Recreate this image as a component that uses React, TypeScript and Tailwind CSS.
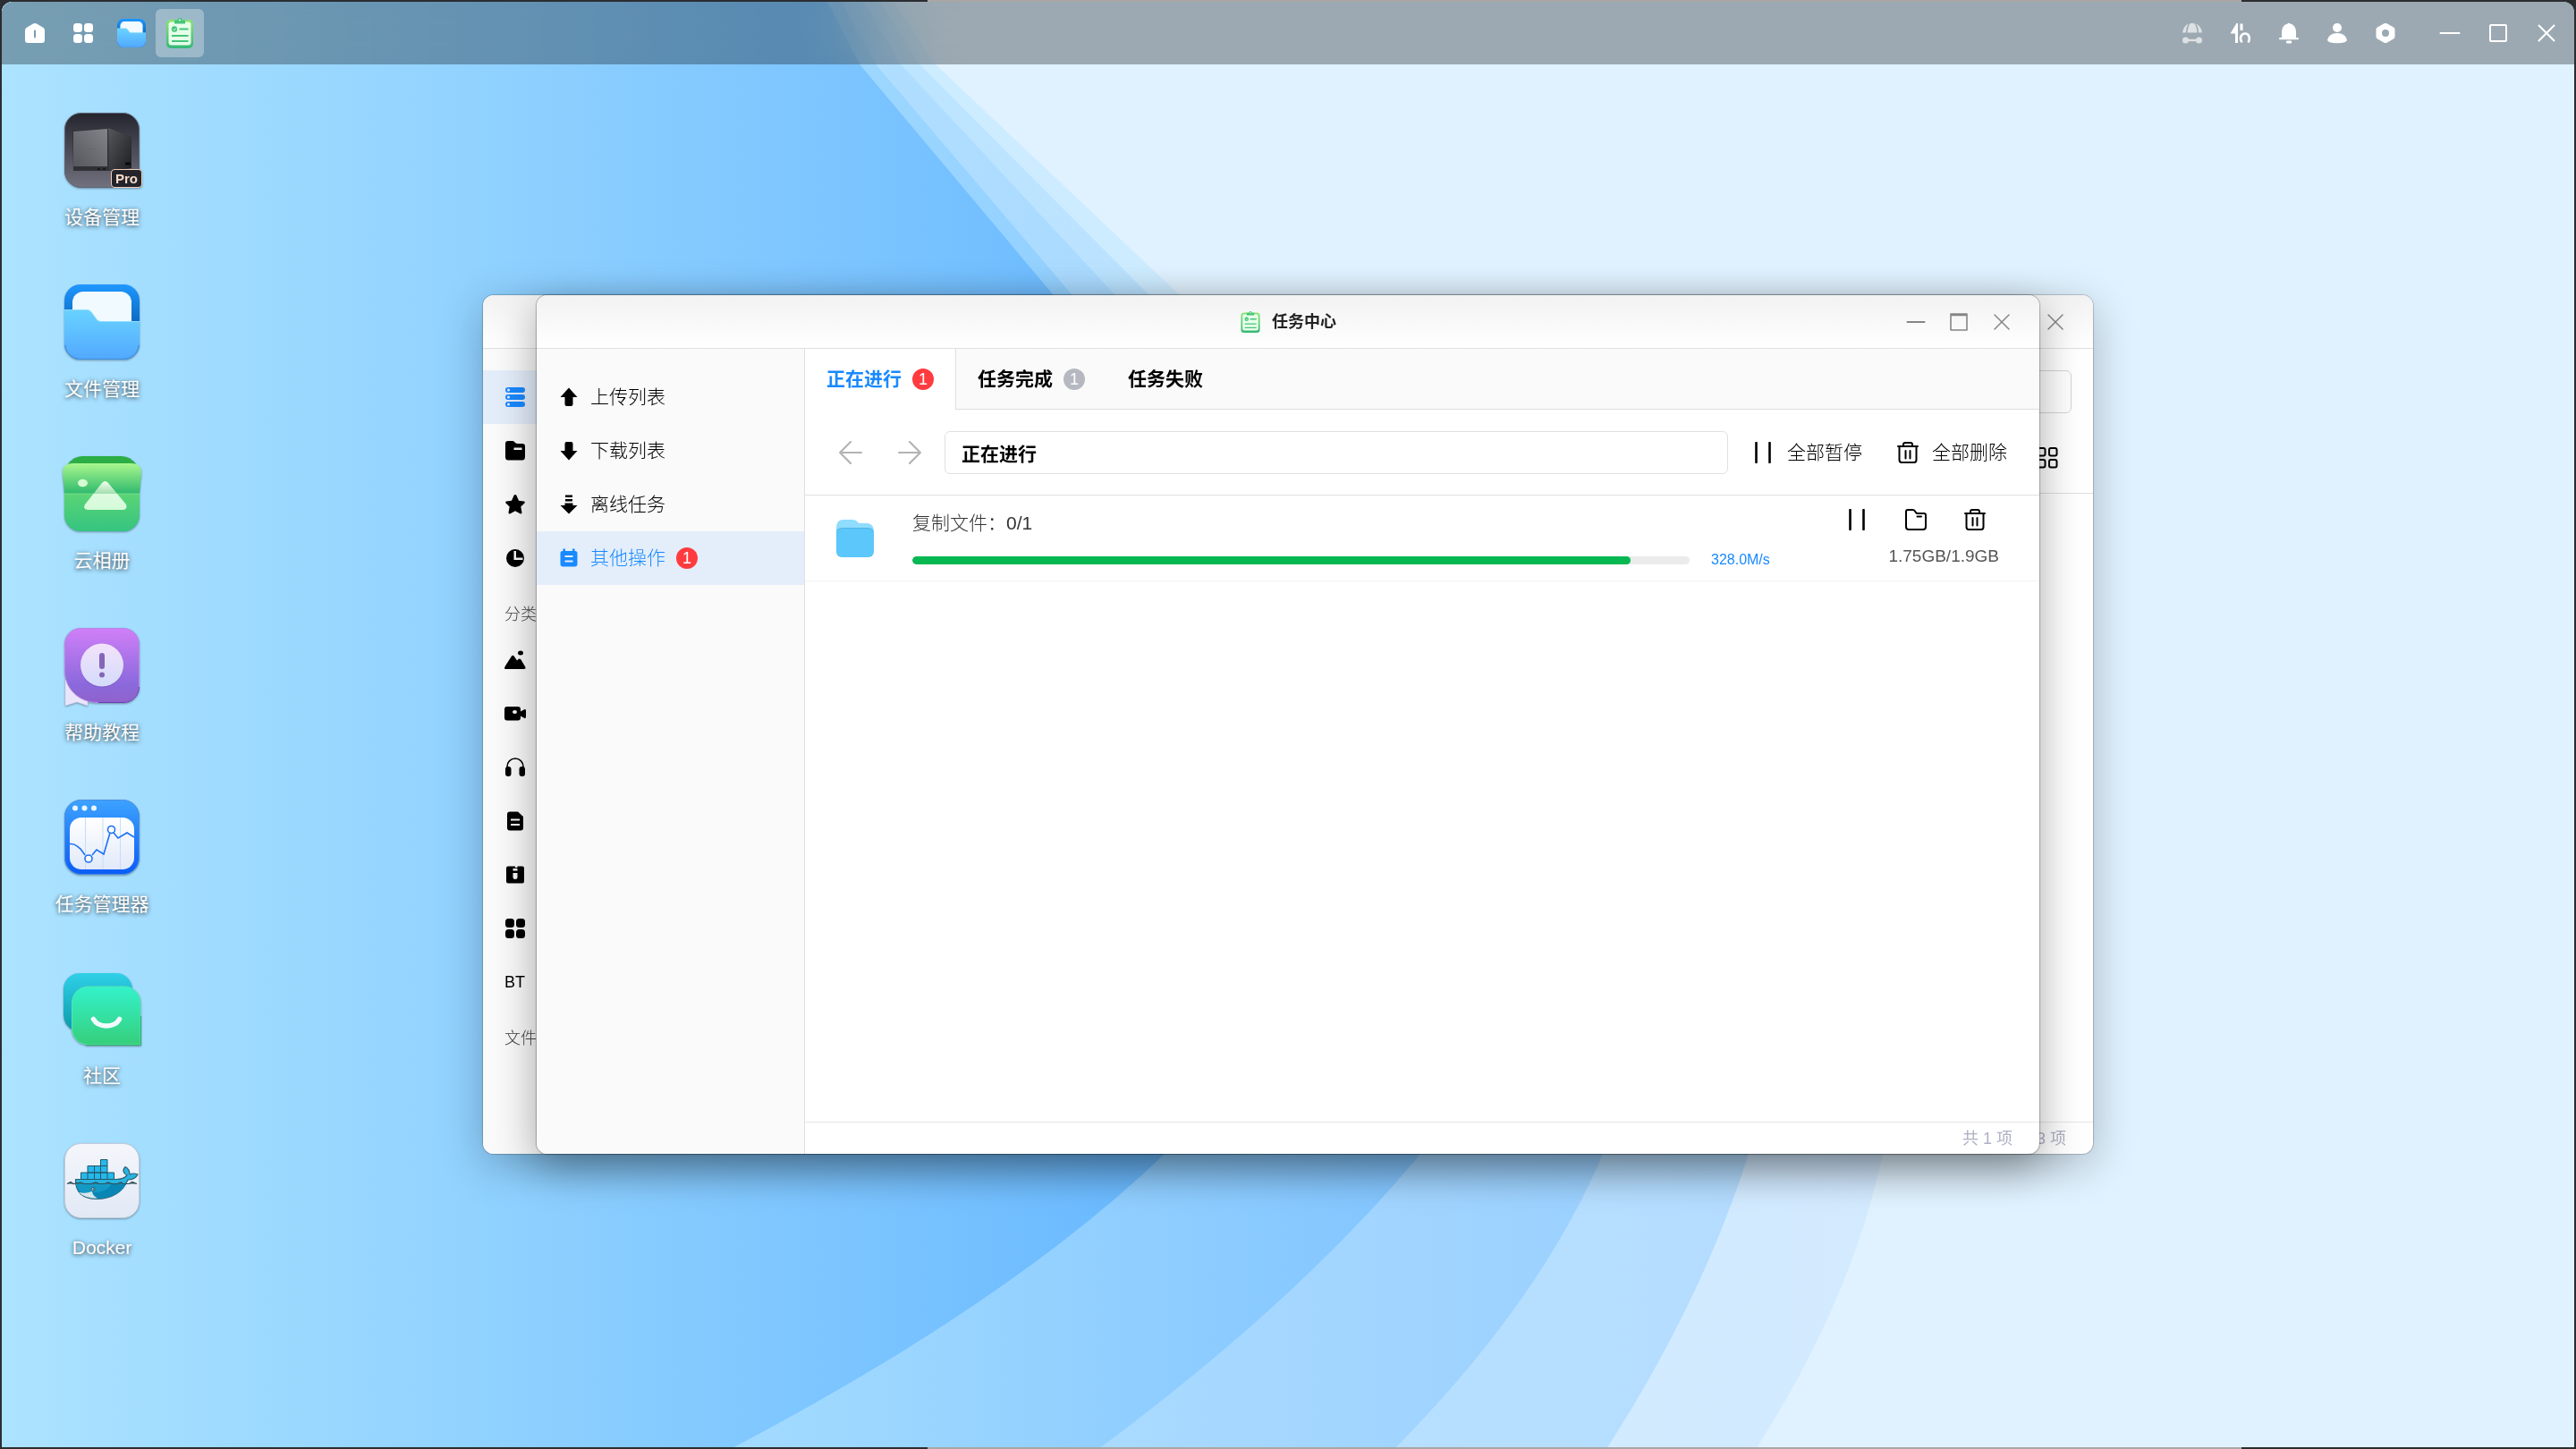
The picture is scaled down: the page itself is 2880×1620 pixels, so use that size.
import type { ReactNode } from "react";

interface IconProps {
  className?: string;
  children: ReactNode;
}

// 24x24 outline icon
function Line({ className = "size-6", children }: IconProps) {
  return (
    <svg
      viewBox="0 0 24 24"
      className={className}
      fill="none"
      stroke="currentColor"
      strokeWidth="2"
      strokeLinecap="round"
      strokeLinejoin="round"
    >
      {children}
    </svg>
  );
}

// 24x24 filled icon
function Solid({ className = "size-6", children }: IconProps) {
  return (
    <svg viewBox="0 0 24 24" className={className} fill="currentColor">
      {children}
    </svg>
  );
}

function Wallpaper() {
  return (
    <svg
      viewBox="2 2 2876 1616"
      preserveAspectRatio="none"
      className="absolute inset-0 h-full w-full"
    >
      <defs>
        <linearGradient id="w1" gradientUnits="userSpaceOnUse" x1="0" y1="0" x2="1300" y2="0">
          <stop offset="0" stopColor="#ace3ff" />
          <stop offset="1" stopColor="#69b9ff" />
        </linearGradient>
        <linearGradient id="w2" gradientUnits="userSpaceOnUse" x1="817" y1="0" x2="1588" y2="0">
          <stop offset="0" stopColor="#a3dbff" />
          <stop offset="1" stopColor="#82c5ff" />
        </linearGradient>
        <linearGradient id="w3" gradientUnits="userSpaceOnUse" x1="980" y1="0" x2="1792" y2="0">
          <stop offset="0" stopColor="#b0deff" />
          <stop offset="1" stopColor="#9bd1ff" />
        </linearGradient>
        <linearGradient id="w4" gradientUnits="userSpaceOnUse" x1="1008" y1="0" x2="1955" y2="0">
          <stop offset="0" stopColor="#bde5ff" />
          <stop offset="1" stopColor="#b3dcff" />
        </linearGradient>
        <linearGradient id="w5" gradientUnits="userSpaceOnUse" x1="1029" y1="0" x2="2105" y2="0">
          <stop offset="0" stopColor="#ccecff" />
          <stop offset="1" stopColor="#d3eaff" />
        </linearGradient>
      </defs>
      <rect width="2880" height="1620" fill="#e0f2ff" />
      <path fill="url(#w5)" d="M0 0H998L1047 73L1318 329C1900 650 2160 850 2105 1290Q2070 1454 1963 1620H0Z" />
      <path fill="url(#w4)" d="M0 0H982L1029 73L1284 329C1800 650 2000 850 1955 1290Q1903 1454 1796 1620H0Z" />
      <path fill="url(#w3)" d="M0 0H964L1008 73L1246 329C1700 650 1860 850 1792 1290Q1723 1454 1559 1620H0Z" />
      <path fill="url(#w2)" d="M0 0H940L980 73L1198 329C1500 650 1700 850 1588 1290Q1452 1454 1228 1620H0Z" />
      <path fill="url(#w1)" d="M0 0H924L962 73L1177 329C1350 650 1450 950 1302 1290Q1132 1454 817 1620H0Z" />
    </svg>
  );
}

function FolderLogo({ className = "size-[84px]" }: { className?: string }) {
  return (
    <svg viewBox="0 0 84 84" className={className}>
      <defs>
        <linearGradient id="fb" x1="0" y1="0" x2="0" y2="1">
          <stop offset="0" stopColor="#1f97ff" />
          <stop offset=".5" stopColor="#0b6bc4" />
        </linearGradient>
        <linearGradient id="ff" x1="0" y1="0" x2="0" y2="1">
          <stop offset="0" stopColor="#69d3ff" />
          <stop offset="1" stopColor="#52a8ff" />
        </linearGradient>
      </defs>
      <rect width="84" height="84" rx="18" fill="url(#fb)" />
      <path d="M9 60V20A12 12 0 0 1 21 8H63A12 12 0 0 1 75 20V60Z" fill="#f0faff" />
      <path
        d="M0 28H25Q28 28 30 31L36 39Q37 41 40 41H84V66A18 18 0 0 1 66 84H18A18 18 0 0 1 0 66Z"
        fill="url(#ff)"
      />
      <path d="M0 28.500H25Q28 28.500 30 31L36 39Q37 41.500 40 41.500H84" fill="none" stroke="#90dcff" />
      <path d="M1 68A17 17 0 0 0 18 83.400H66A17 17 0 0 0 83 68" fill="none" stroke="#3f8fdc" />
    </svg>
  );
}

function ClipboardLogo({ className }: { className: string }) {
  return (
    <svg viewBox="0 0 32 34" className={className}>
      <defs>
        <linearGradient id="cb" x1="0" y1="0" x2="0" y2="1">
          <stop offset="0" stopColor="#8be56f" />
          <stop offset="1" stopColor="#35b877" />
        </linearGradient>
      </defs>
      <rect x="1" y="2" width="30" height="32" rx="5" fill="url(#cb)" />
      <rect x="3.500" y="4.500" width="25" height="26" rx="3" fill="#e6ffe9" />
      <path d="M10 2.500H13.500A2.500 2.500 0 0 1 18.500 2.500H22V6.500H10Z" fill="#46c47a" />
      <circle cx="16" cy="2.500" r="1" fill="#e6ffe9" />
      <circle cx="10" cy="12.500" r="3.200" fill="#46c47a" />
      <path d="M8.500 12.500L9.800 13.800L12 11.500" stroke="#e6ffe9" fill="none" />
      <path d="M15.500 12.500H25.500M7 20H25.500M7 26H25.500" stroke="#46c47a" strokeWidth="2" />
    </svg>
  );
}

function DeviceLogo() {
  return (
    <div className="relative size-[84px]">
      <svg viewBox="0 0 84 84" className="size-full">
        <defs>
          <linearGradient id="dv" x1="0" y1="0" x2="0" y2="1">
            <stop offset="0" stopColor="#24252e" />
            <stop offset="1" stopColor="#72717f" />
          </linearGradient>
          <linearGradient id="df" x1="0" y1="1" x2="1" y2="0">
            <stop offset="0" stopColor="#56575c" />
            <stop offset="1" stopColor="#83848b" />
          </linearGradient>
          <linearGradient id="ds" x1="0" y1="0" x2="1" y2="1">
            <stop offset="0" stopColor="#55575b" />
            <stop offset="1" stopColor="#1d1f23" />
          </linearGradient>
        </defs>
        <rect x=".5" y=".5" width="83" height="83" rx="18" fill="url(#dv)" stroke="#5d6475" />
        <path d="M9 20L48 17L75 27V62L50 65H10Z" fill="#303135" />
        <path d="M10 21L48 18V60H10Z" fill="url(#df)" />
        <path d="M49 17L75 27V62L50 65Z" fill="url(#ds)" />
        <path d="M22 40.500H36" stroke="#66676c" />
        <path d="M68 57H74" stroke="#08090a" strokeWidth="3" />
        <path d="M37 63H40M43 63H46" stroke="#17181a" strokeWidth="2" />
      </svg>
      <span className="absolute -right-[3px] bottom-0 rounded-[4px] border border-[#f3cdb8] bg-[#23252a] px-1 text-[15px] leading-[19px] font-bold text-[#f5d9ca]">
        Pro
      </span>
    </div>
  );
}

function PhotoLogo() {
  return (
    <svg viewBox="0 0 84 84" className="size-[84px] overflow-visible">
      <defs>
        <linearGradient id="pt" x1="0" y1="0" x2="0" y2="1">
          <stop offset="0" stopColor="#a9f78e" />
          <stop offset="1" stopColor="#2fb96d" />
        </linearGradient>
        <linearGradient id="pb" x1="0" y1="0" x2="0" y2="1">
          <stop offset="0" stopColor="#5cd575" />
          <stop offset="1" stopColor="#35c481" />
        </linearGradient>
        <linearGradient id="pm" x1="0" y1="0" x2="0" y2="1">
          <stop offset="0" stopColor="#f1fff0" />
          <stop offset=".43" stopColor="#a3dfae" />
          <stop offset=".44" stopColor="#e0fbe2" />
          <stop offset="1" stopColor="#d3fad8" />
        </linearGradient>
      </defs>
      <path d="M3 10Q10 0 20 0H64Q74 0 81 10V20H3Z" fill="#2cae46" />
      <path d="M0 41H84V66A18 18 0 0 1 66 84H18A18 18 0 0 1 0 66Z" fill="url(#pb)" />
      <path d="M0 42L-2 20Q-3 8 10 8H74Q87 8 86 20L84 42Z" fill="url(#pt)" />
      <path d="M0 42H84" stroke="#79dd8f" />
      <ellipse cx="20.500" cy="30" rx="5.500" ry="4.300" fill="#d5fbd2" />
      <path
        d="M42 30Q45.500 26 49 30L69 54Q71 59 66 60H26Q20 59 23 54Z"
        fill="url(#pm)"
      />
    </svg>
  );
}

function HelpLogo() {
  return (
    <svg viewBox="0 0 84 84" className="size-[84px] overflow-visible">
      <defs>
        <linearGradient id="hp" x1="0" y1="0" x2="0" y2="1">
          <stop offset="0" stopColor="#d07ff8" />
          <stop offset=".75" stopColor="#8b69dc" />
          <stop offset="1" stopColor="#8f62cb" />
        </linearGradient>
        <linearGradient id="hc" x1="0" y1="0" x2="0" y2="1">
          <stop offset="0" stopColor="#f3e2fb" />
          <stop offset="1" stopColor="#d3dcfb" />
        </linearGradient>
      </defs>
      <path d="M1 58V87L14 83L26 87V70Z" fill="#ebe5fc" stroke="#c9c4ea" strokeWidth=".5" />
      <path
        d="M18 .5H66A17.500 17.500 0 0 1 83.500 18V66A17.500 17.500 0 0 1 66 83.500H38C16 83.500 .5 68 .5 48V18A17.500 17.500 0 0 1 18 .5Z"
        fill="url(#hp)"
        stroke="#b08be6"
      />
      <path d="M38 83.500H66A17.500 17.500 0 0 0 83.500 66" fill="none" stroke="#6a3fae" />
      <circle cx="42" cy="43" r="24" fill="#7a55c4" opacity=".4" />
      <circle cx="42" cy="41.500" r="24" fill="url(#hc)" />
      <path d="M42 31V43" stroke="#8465b6" strokeWidth="6" strokeLinecap="round" />
      <circle cx="42" cy="52.500" r="3" fill="#8465b6" />
    </svg>
  );
}

function MonitorLogo() {
  return (
    <svg viewBox="0 0 84 84" className="size-[84px]">
      <defs>
        <linearGradient id="mb" x1="0" y1="0" x2="0" y2="1">
          <stop offset="0" stopColor="#3ca2ff" />
          <stop offset="1" stopColor="#0b5cf7" />
        </linearGradient>
        <linearGradient id="mp" x1="0" y1="0" x2="0" y2="1">
          <stop offset="0" stopColor="#fff" />
          <stop offset="1" stopColor="#e1e9f9" />
        </linearGradient>
      </defs>
      <rect x=".5" y=".5" width="83" height="83" rx="18" fill="url(#mb)" stroke="#4a8fe0" />
      <g fill="#e9f6ff">
        <circle cx="12" cy="9.500" r="3" />
        <circle cx="22.500" cy="9.500" r="3" />
        <circle cx="33" cy="9.500" r="3" />
      </g>
      <rect x="6" y="20" width="72" height="58" rx="13" fill="url(#mp)" />
      <path d="M23.500 20V78M43 20V78M62.500 20V78" stroke="#c8dcf6" />
      <path
        d="M6 49.500Q11 49 14 52L18 55L23 62M31 62L36 56L44 61L51 37M55 37L60 43L70 37L78 42"
        fill="none"
        stroke="#1b71f5"
        strokeWidth="1.600"
      />
      <circle cx="27" cy="66" r="4" fill="#fff" stroke="#1b71f5" strokeWidth="1.600" />
      <circle cx="52.500" cy="33.500" r="4" fill="#fff" stroke="#1b71f5" strokeWidth="1.600" />
    </svg>
  );
}

function CommunityLogo() {
  return (
    <svg viewBox="0 0 84 84" className="size-[84px] overflow-visible">
      <defs>
        <linearGradient id="k1" x1="0" y1="0" x2="0" y2="1">
          <stop offset="0" stopColor="#2fd0e8" />
          <stop offset="1" stopColor="#0c9bab" />
        </linearGradient>
        <linearGradient id="k2" x1="0" y1="0" x2="0" y2="1">
          <stop offset="0" stopColor="#33f2cb" />
          <stop offset="1" stopColor="#36cf7b" />
        </linearGradient>
      </defs>
      <path d="M17 2H58A18 18 0 0 1 76 20V66H10Q-1 60 -1 48V20A18 18 0 0 1 17 2Z" fill="url(#k1)" />
      <path
        d="M27 17H67A18 18 0 0 1 85 35V82H27A18 18 0 0 1 8.500 64V35A18 18 0 0 1 27 17Z"
        fill="url(#k2)"
        stroke="#58e3b4"
      />
      <path d="M24 82.500H85.500V50" fill="none" stroke="#2fae6b" />
      <path
        d="M32.500 53.500C38 63.500 56 63.500 61.500 53.500"
        fill="none"
        stroke="#f2fbff"
        strokeWidth="5.500"
        strokeLinecap="round"
      />
    </svg>
  );
}

function DockerLogo() {
  return (
    <svg viewBox="0 0 84 84" className="size-[84px]">
      <defs>
        <linearGradient id="dk" x1="0" y1="0" x2="0" y2="1">
          <stop offset="0" stopColor="#f4f6fb" />
          <stop offset="1" stopColor="#e2e9f5" />
        </linearGradient>
      </defs>
      <rect x=".5" y=".5" width="83" height="83" rx="18" fill="url(#dk)" stroke="#c3cbd8" />
      <path
        d="M12.500 40.500H58Q66 40.500 70 36Q63 32 68 26.500Q73 29 73 35Q77 33 82 35Q79 41 71 41Q62 62 36 62.500Q12 62 12.500 40.500Z"
        fill="#27b4e0"
        stroke="#2f6072"
        strokeWidth="1.200"
        strokeLinejoin="round"
      />
      <path d="M13 46H69Q60 61.500 37 62Q15 61.500 13 46Z" fill="#0a86b5" />
      <path d="M13 46H52Q48 55 32 55Q22 56 17 54Z" fill="#1499c6" />
      <path d="M16 55Q24 57 31 54Q31 58 37 62Q23 62 16 55Z" fill="#d6e6ea" />
      <g fill="#24b9ea" stroke="#24566b">
        <path d="M18.500 33H55.500V40.500H18.500ZM26 25.500H48V33H26ZM40.500 18.500H48V25.500H40.500Z" />
        <path d="M26 33V40.500M33.500 25.500V40.500M40.500 25.500V40.500M48 33V40.500" />
      </g>
      <path
        d="M3 45.500L7 43.500L10 45.500L18 44L22 45.500L30 45.500L35 44L39 45.500H45L49 44L53 45.500H59L63 44L66 45.500H72L76 43.500L81 45.500"
        fill="#2f4f5c"
        stroke="#2f4f5c"
        strokeWidth="1.200"
      />
      <circle cx="32" cy="51.500" r="2" fill="#d6e6ea" stroke="#24566b" />
      <circle cx="32.300" cy="51.500" r=".9" fill="#24566b" />
    </svg>
  );
}

function SmallFolder() {
  return (
    <svg viewBox="0 0 44 44" className="size-11 shrink-0">
      <path d="M1 10Q1 1 9 1H19Q23 1 25 4Q26 5 29 5H36Q43 6 43 14V24H1Z" fill="#8fdcfd" />
      <path d="M1 16Q1 10 8 10H36Q43 10 43 16V18H1Z" fill="#4fb3e6" />
      <rect x="1" y="11" width="42" height="32" rx="6" fill="#5bc7fa" />
    </svg>
  );
}

const pauseIcon = (
  <Line className="size-6">
    <path d="M4.500 1V23M19.500 1V23" strokeWidth="2.600" />
  </Line>
);

const trashIcon = (
  <Line className="size-6">
    <path d="M1 5H23M7 4.500V3Q7 1 9 1H15Q17 1 17 3V4.500M2.500 5.500V20Q2.500 23 5 23H19Q21.500 23 21.500 20V5.500M9.500 10V18.500M14.500 10V18.500" />
  </Line>
);

const folderOutline = (
  <Line className="size-6">
    <path d="M1 3Q1 1 3 1H8.500Q10 1 11 2.500L12 4Q12.500 5 14 5H21Q23 5 23 7V20Q23 23 20 23H4Q1 23 1 20ZM13.500 8.500H18" />
  </Line>
);

const gridSolid = (
  <Solid className="size-6">
    <rect x="1" y="1" width="10" height="10" rx="3.500" />
    <rect x="13" y="1" width="10" height="10" rx="3.500" />
    <rect x="1" y="13" width="10" height="10" rx="3.500" />
    <rect x="13" y="13" width="10" height="10" rx="3.500" />
  </Solid>
);

const desktopApps = [
  { name: "设备管理", logo: <DeviceLogo /> },
  { name: "文件管理", logo: <FolderLogo /> },
  { name: "云相册", logo: <PhotoLogo /> },
  { name: "帮助教程", logo: <HelpLogo /> },
  { name: "任务管理器", logo: <MonitorLogo /> },
  { name: "社区", logo: <CommunityLogo /> },
  { name: "Docker", logo: <DockerLogo /> },
];

const dockItems = [
  {
    name: "主页",
    icon: (
      <Solid>
        <path
          fillRule="evenodd"
          d="M12 1Q13 1 14 1.500L21.500 6Q23 7 23 9V20Q23 23 20 23H4Q1 23 1 20V9Q1 7 2.500 6L10 1.500Q11 1 12 1ZM12 8.500Q11 8.500 11 9.500V16.500Q11 17.500 12 17.500Q13 17.500 13 16.500V9.500Q13 8.500 12 8.500Z"
        />
      </Solid>
    ),
  },
  { name: "应用", icon: gridSolid },
  { name: "文件管理", icon: <FolderLogo className="size-8" /> },
  { name: "任务中心", icon: <ClipboardLogo className="h-[34px] w-8" />, active: true },
];

const trayItems = [
  {
    name: "加速",
    icon: (
      <Solid className="size-6 opacity-65">
        <path d="M1 11.500Q2 4 8 1.500Q5 5 5 11.500ZM6.500 11.500Q7 4 10 1H14Q17 4 17.500 11.500ZM23 11.500Q22 4 16 1.500Q19 5 19 11.500Z" />
        <circle cx="4.500" cy="20" r="3.500" />
        <circle cx="19.500" cy="20" r="3.500" />
        <path d="M5 18.800H19V21.200H5Z" />
      </Solid>
    ),
  },
  {
    name: "传输",
    icon: (
      <Solid>
        <path d="M9 1V23H6V12.500H.5L7.500 1Z" />
        <path d="M11.500 1.500H14.500V9H11.500Z" />
        <path
          d="M13 21.500Q10.500 16.500 14 13.500Q17 11.500 20 13.500Q23 16.500 21 21.500"
          fill="none"
          stroke="currentColor"
          strokeWidth="2.600"
          strokeLinecap="round"
        />
      </Solid>
    ),
  },
  {
    name: "通知",
    icon: (
      <Solid>
        <path d="M10.500 1.500Q12 0 13.500 1.500Q19.500 3 20 10V17H22Q23 17 23 18.300Q23 19.300 22 19.300H2Q1 19.300 1 18.300Q1 17 2 17H4V10Q4.500 3 10.500 1.500Z" />
        <rect x="8.800" y="20.500" width="6.500" height="3" rx="1.500" />
      </Solid>
    ),
  },
  {
    name: "用户",
    icon: (
      <Solid>
        <circle cx="12" cy="6" r="5" />
        <path d="M1 19.500Q3 12 12 12Q21 12 23 19.500Q23 23.200 12 23.200Q1 23.200 1 19.500Z" />
      </Solid>
    ),
  },
  {
    name: "设置",
    icon: (
      <Solid>
        <path
          fillRule="evenodd"
          d="M10.500 1.300Q12 .6 13.500 1.300L21 5.600Q22.500 6.500 22.500 8V16Q22.500 17.500 21 18.400L13.500 22.700Q12 23.400 10.500 22.700L3 18.400Q1.500 17.500 1.500 16V8Q1.500 6.500 3 5.600ZM12 8A4 4 0 1 0 12 16A4 4 0 1 0 12 8Z"
        />
      </Solid>
    ),
  },
];

const screenControls = [
  { name: "最小化", icon: <path d="M1.500 12H22.500" /> },
  { name: "最大化", icon: <rect x="3" y="3" width="18" height="18" rx="1" /> },
  { name: "关闭", icon: <path d="M3.500 3.500L20.500 20.500M20.500 3.500L3.500 20.500" /> },
];

const windowControls = [
  { name: "最小化", icon: <path d="M2.500 12H21.500" /> },
  { name: "最大化", icon: <path d="M3 4.500H21M3 3V21H21V3Z" strokeWidth="1.600" /> },
  { name: "关闭", icon: <path d="M4 4L20 20M20 4L4 20" strokeWidth="1.500" /> },
];

const taskMenu = [
  { name: "上传列表", icon: <path d="M12 1.500L21.500 12H16.500V20Q16.500 22 14.500 22H9.500Q7.500 22 7.500 20V12H2.500Z" /> },
  { name: "下载列表", icon: <path d="M12 22.500L2.500 12H7.500V4Q7.500 2 9.500 2H14.500Q16.500 2 16.500 4V12H21.500Z" /> },
  {
    name: "离线任务",
    icon: <path d="M12 22.500L2.500 13H7.500V10.500H16.500V13H21.500ZM8 1.500H16V4H8ZM8 6H16V8.500H8Z" />,
  },
  {
    name: "其他操作",
    count: 1,
    icon: (
      <path
        fillRule="evenodd"
        d="M5.500 1.500H8V4H16V1.500H18.500V4H19Q21.500 4 21.500 6.500V18.500Q21.500 21.500 18.500 21.500H5.500Q2.500 21.500 2.500 18.500V6.500Q2.500 4 5 4H5.500ZM7.500 9V11H16.500V9ZM7.500 14.500V16.500H16.500V14.500Z"
      />
    ),
  },
];

const placeIcons = [
  {
    name: "存储",
    icon: (
      <path
        fillRule="evenodd"
        d="M4 1H20Q23 1 23 4Q23 7 20 7H4Q1 7 1 4Q1 1 4 1ZM4.500 2.500A1.500 1.500 0 1 0 4.500 5.500A1.500 1.500 0 1 0 4.500 2.500ZM4 9H20Q23 9 23 12Q23 15 20 15H4Q1 15 1 12Q1 9 4 9ZM4.500 10.500A1.500 1.500 0 1 0 4.500 13.500A1.500 1.500 0 1 0 4.500 10.500ZM4 17H20Q23 17 23 20Q23 23 20 23H4Q1 23 1 20Q1 17 4 17ZM4.500 18.500A1.500 1.500 0 1 0 4.500 21.500A1.500 1.500 0 1 0 4.500 18.500Z"
      />
    ),
  },
  {
    name: "文件夹",
    icon: (
      <path
        fillRule="evenodd"
        d="M1 4Q1 1 4 1H9Q11 1 12 3Q13 4 15 4H20Q23 4 23 7V19Q23 22.500 20 22.500H4Q1 22.500 1 19ZM10.500 8.500V11H19.500V8.500Z"
      />
    ),
  },
  {
    name: "收藏",
    icon: <path d="M12 1Q13 1 13.500 2L16 7.800L22 8.500Q23.500 9 22.500 10.500L18.300 14.500L19.500 21Q19.500 23 17.500 22.300L12 19.200L6.500 22.300Q4.500 23 4.500 21L5.700 14.500L1.500 10.500Q.5 9 2 8.500L8 7.800L10.500 2Q11 1 12 1Z" />,
  },
  {
    name: "最近",
    icon: <path fillRule="evenodd" d="M12 2A10 10 0 1 0 12 22A10 10 0 1 0 12 2ZM10.500 4H13V11.500H20.500V14H10.500Z" />,
  },
];

const categoryIcons = [
  {
    name: "图片",
    icon: <path d="M0 21Q0 20 1 18.500L8 7.500Q9.500 6 11 8L14 12.500L15.500 11Q17 10 18.500 11.500L23.500 20Q24 22 22 22H1Q0 22 0 21ZM18 1.500A3 2.500 0 1 0 18 6.500A3 2.500 0 1 0 18 1.500Z" />,
  },
  {
    name: "视频",
    icon: (
      <path
        fillRule="evenodd"
        d="M3 4H15Q18 4 18 7V9.500L22.500 7Q24 7 24 8V15.500Q24 17 22.500 17L18 14.500V16.500Q18 19.500 15 19.500H3Q0 19.500 0 16.500V7Q0 4 3 4ZM11.500 8A2.500 2 0 1 0 11.500 12A2.500 2 0 1 0 11.500 8Z"
      />
    ),
  },
  {
    name: "音乐",
    icon: (
      <>
        <path d="M3 13V11A9 9 0 0 1 21 11V13" fill="none" stroke="currentColor" strokeWidth="1.500" />
        <rect x="1" y="11" width="6.500" height="11" rx="3" />
        <rect x="16.500" y="11" width="6.500" height="11" rx="3" />
      </>
    ),
  },
  {
    name: "文档",
    icon: (
      <path
        fillRule="evenodd"
        d="M6 1.500H15L21 7V19.500Q21 22.500 18 22.500H6Q3 22.500 3 19.500V4.500Q3 1.500 6 1.500ZM7 9.500V11.500H17V9.500ZM7 15V17H17V15Z"
      />
    ),
  },
  {
    name: "压缩包",
    icon: (
      <path
        fillRule="evenodd"
        d="M4 2.500H20Q22 2.500 22 4.500V19.500Q22 21.500 20 21.500H4Q2 21.500 2 19.500V4.500Q2 2.500 4 2.500ZM12 2.500V5H9.500V7.500H12V10H9.500V15Q9.500 17 12 17Q14.500 17 14.500 15V10H12V7.500H14.500V5H12V4H14.500V2.500Z"
      />
    ),
  },
];

interface DesktopWindowProps {
  className: string;
  title?: ReactNode;
  footer: string;
  sidebar: ReactNode;
  children: ReactNode;
}

function DesktopWindow({ className, title, footer, sidebar, children }: DesktopWindowProps) {
  return (
    <section
      className={`col-start-1 row-start-1 flex h-[960px] max-h-full max-w-full flex-col overflow-hidden rounded-xl bg-white ${className}`}
    >
      <header className="grid h-[60px] shrink-0 grid-cols-[1fr_auto_1fr] items-center border-b border-[#dfdfdf] bg-linear-to-b from-[#f2f2f2] to-white">
        <h1 className="col-start-2 flex items-center gap-3 text-lg font-bold text-[#222]">{title}</h1>
        <div className="col-start-3 flex justify-end pr-[18px] text-[#858585]">
          {windowControls.map(({ name, icon }) => (
            <button key={name} aria-label={name} className="grid h-12 w-12 place-items-center">
              <Line>{icon}</Line>
            </button>
          ))}
        </div>
      </header>
      <div className="flex min-h-0 flex-1">
        <nav className="w-[300px] shrink-0 border-r border-[#dfdfdf] bg-[#fafafa] pt-6">{sidebar}</nav>
        <div className="flex min-w-0 flex-1 flex-col">
          {children}
          <footer className="flex h-9 shrink-0 items-center justify-end border-t border-[#e6e6e6] pr-[30px] text-lg text-[#aeb0c4]">
            {footer}
          </footer>
        </div>
      </div>
    </section>
  );
}

function Badge({ color, children }: { color: string; children: ReactNode }) {
  return (
    <span className={`grid size-6 place-items-center rounded-full text-lg leading-6 font-normal text-white ${color}`}>
      {children}
    </span>
  );
}

function FileWindow() {
  return (
    <DesktopWindow
      className="w-[1800px] shadow-[0_0_1px_1px_rgba(0,0,0,0.2),0_12px_48px_rgba(0,0,0,0.25)]"
      footer="共 3 项"
      sidebar={
        <>
          {placeIcons.map(({ name, icon }, i) => (
            <button
              key={name}
              aria-label={name}
              className={`flex h-[60px] w-full items-center pl-6 ${i === 0 ? "bg-[#e4eefb] text-[#1989ff]" : "text-black"}`}
            >
              <Solid>{icon}</Solid>
            </button>
          ))}
          <h2 className="mt-3 pl-6 text-lg leading-[42px] font-light text-[#444]">分类</h2>
          {categoryIcons.map(({ name, icon }) => (
            <button key={name} aria-label={name} className="flex h-[60px] w-full items-center pl-6">
              <Solid>{icon}</Solid>
            </button>
          ))}
          <button aria-label="其他" className="flex h-[60px] w-full items-center pl-6">
            {gridSolid}
          </button>
          <button className="flex h-[60px] w-full items-center pl-6 text-lg">BT</button>
          <h2 className="mt-3 pl-6 text-lg leading-[42px] font-light text-[#444]">文件</h2>
        </>
      }
    >
      <div className="flex h-[162px] flex-col gap-[38px] border-b border-[#dfdfdf] px-6 pt-6">
        <input aria-label="路径" className="h-12 shrink-0 rounded-md border border-[#d5d5d5] bg-white px-[18px]" />
        <button aria-label="视图" className="self-end pr-[15px]">
          <Line>
            <rect x="1" y="1" width="8.500" height="8.500" rx="2" />
            <rect x="14" y="1" width="8.500" height="8.500" rx="2" />
            <rect x="1" y="14" width="8.500" height="8.500" rx="2" />
            <rect x="14" y="14" width="8.500" height="8.500" rx="2" />
          </Line>
        </button>
      </div>
      <div className="flex-1" />
    </DesktopWindow>
  );
}

function TaskRow() {
  const progress = 92.4;

  return (
    <li className="flex h-24 border-b border-[#f2f2f2] pr-[45px] pl-[34px]">
      <div className="flex w-[86px] shrink-0 items-center">
        <SmallFolder />
      </div>
      <div className="flex min-w-0 flex-1 flex-col gap-[11px] pt-4">
        <p className="leading-[30px] font-light text-[#333]">复制文件：0/1</p>
        <div className="flex h-[30px] items-center gap-6">
          <div
            role="progressbar"
            aria-label="复制文件"
            aria-valuenow={progress}
            className="h-[9px] flex-1 overflow-hidden rounded-full bg-[#ebebeb]"
          >
            <div className="h-full rounded-full bg-[#05b852]" style={{ width: `${progress}%` }} />
          </div>
          <span className="w-[148px] text-base text-[#1989ff]">328.0M/s</span>
        </div>
      </div>
      <div className="flex shrink-0 flex-col items-end gap-[11px] pt-3">
        <div className="flex h-[30px] items-center gap-[42px] pr-[15px]">
          <button aria-label="暂停">{pauseIcon}</button>
          <button aria-label="打开文件夹">{folderOutline}</button>
          <button aria-label="删除">{trashIcon}</button>
        </div>
        <span className="w-[174px] text-right text-[19px] leading-[30px] text-[#555]">1.75GB/1.9GB</span>
      </div>
    </li>
  );
}

function TaskWindow() {
  return (
    <DesktopWindow
      className="z-10 w-[1680px] shadow-[0_0_1px_1px_rgba(0,0,0,0.25),0_15px_48px_rgba(0,0,0,0.35)]"
      title={
        <>
          <ClipboardLogo className="size-6" />
          任务中心
        </>
      }
      footer="共 1 项"
      sidebar={taskMenu.map(({ name, icon, count }) => (
        <button
          key={name}
          className={`flex h-[60px] w-full items-center gap-3 pl-6 font-light ${count ? "bg-[#e4eefb] text-[#1989ff]" : "text-black"}`}
        >
          <Solid>{icon}</Solid>
          {name}
          {count && <Badge color="bg-[#ff3b3f]">{count}</Badge>}
        </button>
      ))}
    >
      <div className="flex h-[68px] shrink-0 bg-[#fafafa] font-bold">
        <button className="flex items-center gap-3 border-r border-[#dfdfdf] bg-white px-6 pb-px text-[#1989ff]">
          正在进行 <Badge color="bg-[#ff3b3f]">1</Badge>
        </button>
        <div className="flex flex-1 border-b border-[#dfdfdf]">
          <button className="flex items-center gap-3 px-6">
            任务完成 <Badge color="bg-[#b5b8c1]">1</Badge>
          </button>
          <button className="px-6">任务失败</button>
        </div>
      </div>
      <div className="flex h-24 shrink-0 items-center gap-6 border-b border-[#dfdfdf] px-9">
        <div className="flex gap-9 text-[#b3b3b3]">
          <button aria-label="后退" className="grid size-[30px] place-items-center">
            <Line className="size-[26px]">
              <path d="M23 12H1M12 1L1 12L12 23" />
            </Line>
          </button>
          <button aria-label="前进" className="grid size-[30px] place-items-center">
            <Line className="size-[26px]">
              <path d="M1 12H23M12 1L23 12L12 23" />
            </Line>
          </button>
        </div>
        <input
          aria-label="当前位置"
          defaultValue="正在进行"
          className="h-12 min-w-0 flex-1 rounded-md border border-[#e0e0e0] px-[18px] font-bold"
        />
        <div className="flex gap-9 font-light">
          <button className="flex items-center gap-3">
            <span className="grid size-[30px] place-items-center">{pauseIcon}</span>
            全部暂停
          </button>
          <button className="flex items-center gap-3">
            <span className="grid size-[30px] place-items-center">{trashIcon}</span>
            全部删除
          </button>
        </div>
      </div>
      <ul className="min-h-0 flex-1">
        <TaskRow />
      </ul>
    </DesktopWindow>
  );
}

export default function App() {
  return (
    <div className="h-screen w-full bg-[linear-gradient(90deg,#2b2d31_36%,#a9a6a5_36%,#a9a6a5_87%,#2b2d31_87%)] p-[2px] font-['Liberation_Sans','Noto_Sans_CJK_SC',sans-serif] text-[21px] text-black">
      <div className="relative isolate flex h-full flex-col overflow-hidden rounded-t-xl">
        <Wallpaper />
        <header className="relative flex h-[70px] shrink-0 items-center justify-between bg-black/30 pr-1 pl-[10px] text-white backdrop-blur-[36px]">
          <nav className="flex">
            {dockItems.map(({ name, icon, active }) => (
              <button
                key={name}
                aria-label={name}
                className={`grid size-[54px] place-items-center rounded-md ${active ? "bg-white/30" : ""}`}
              >
                {icon}
              </button>
            ))}
          </nav>
          <div className="flex gap-[18px]">
            <div className="flex">
              {trayItems.map(({ name, icon }) => (
                <button key={name} aria-label={name} className="grid size-[54px] place-items-center">
                  {icon}
                </button>
              ))}
            </div>
            <div className="flex">
              {screenControls.map(({ name, icon }) => (
                <button key={name} aria-label={name} className="grid size-[54px] place-items-center">
                  <Line>{icon}</Line>
                </button>
              ))}
            </div>
          </div>
        </header>
        <main className="relative flex-1">
          <ul className="ml-[22px] flex w-[180px] flex-col gap-[60px] pt-[54px]">
            {desktopApps.map(({ name, logo }) => (
              <li key={name}>
                <a href="#" className="flex flex-col items-center gap-[18px]">
                  <span className="drop-shadow-[0_1px_1px_rgba(0,0,0,0.35)]">{logo}</span>
                  <span className="leading-[30px] text-white [text-shadow:0_1px_5px_rgba(0,0,0,0.8)]">{name}</span>
                </a>
              </li>
            ))}
          </ul>
        </main>
        {/* open windows stack in the middle of the screen */}
        <div className="pointer-events-none absolute inset-0 grid place-content-center place-items-center *:pointer-events-auto">
          <FileWindow />
          <TaskWindow />
        </div>
      </div>
    </div>
  );
}
